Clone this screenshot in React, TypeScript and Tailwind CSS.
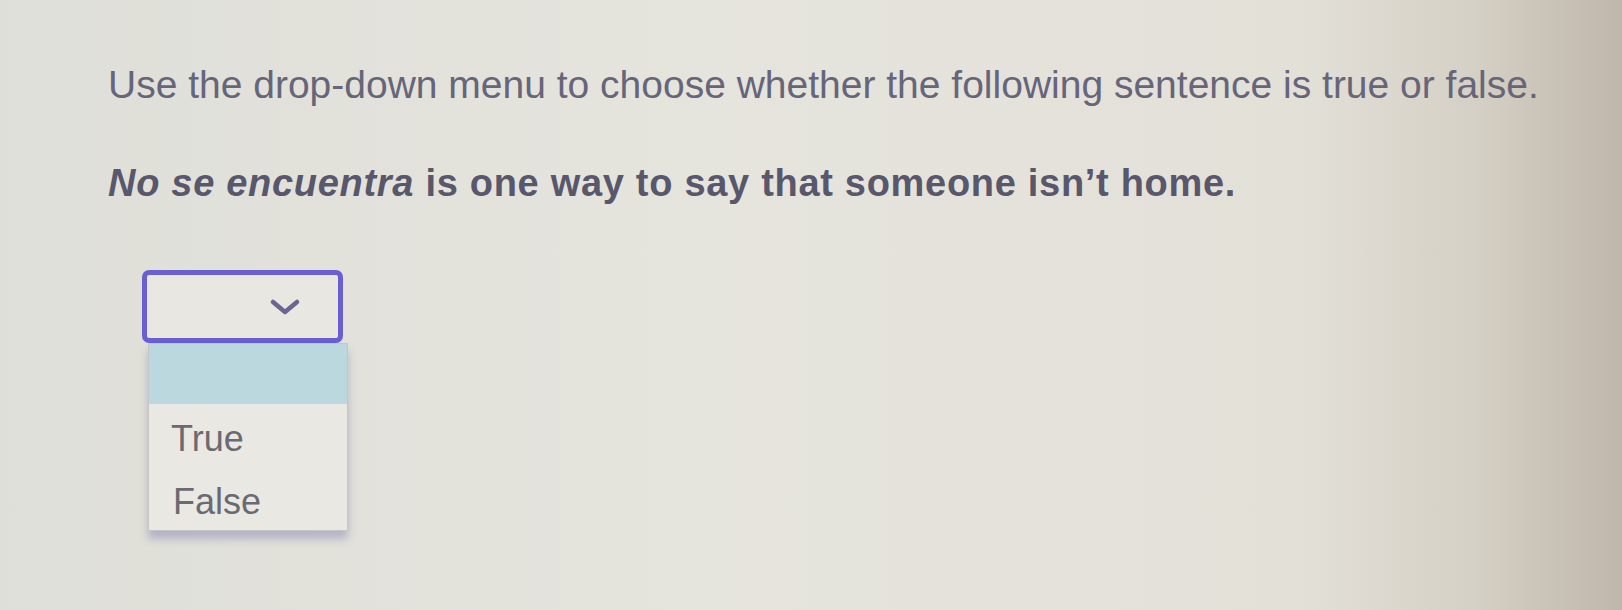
import React from "react";

export default function App() {
  return (
    <div
      className="w-[1622px] h-[610px] overflow-hidden bg-[linear-gradient(90deg,#dfdfd9_0%,#e5e4dd_45%,#e3e0d8_80%,#d5d0c5_91%,#bfb7aa_100%)]"
      style={{ fontFamily: '"Liberation Sans", Arial, sans-serif' }}
    >
      <div className="pl-[108px] pt-[65px]">
        <p className="text-[39px] leading-[40px] text-[#66657a] whitespace-nowrap">
          Use the drop-down menu to choose whether the following sentence is true or false.
        </p>
        <p className="mt-[58px] text-[38px] leading-[40px] font-bold text-[#58576b] tracking-[0.7px] whitespace-nowrap">
          <i>No se encuentra</i> is one way to say that someone isn&#8217;t home.
        </p>
        <div className="mt-[67px] ml-[34px] w-[201px]">
          <div className="h-[73px] rounded-[7px] border-[5px] border-[#6a5fd0] bg-[#e8e7e1] flex items-center justify-end pr-[37px]">
            <svg width="32" height="18" viewBox="0 0 32 18" fill="none">
              <path d="M4 4 L16 14 L28 4" stroke="#6b6690" strokeWidth="4.5" strokeLinecap="round" strokeLinejoin="round" />
            </svg>
          </div>
          <div className="ml-[6px] w-[200px] border border-[#c6c5c6] bg-[#e9e8e2] shadow-[0_8px_8px_rgba(100,95,160,0.35)]">
            <div className="h-[60px] bg-[#bcd8df]" />
            <div className="h-[63px] flex items-center pl-[22px] pt-[6px] text-[36px] text-[#6a6a72]">True</div>
            <div className="h-[63px] flex items-center pl-[24px] pt-[6px] text-[36px] text-[#6a6a72]">False</div>
          </div>
        </div>
      </div>
    </div>
  );
}
